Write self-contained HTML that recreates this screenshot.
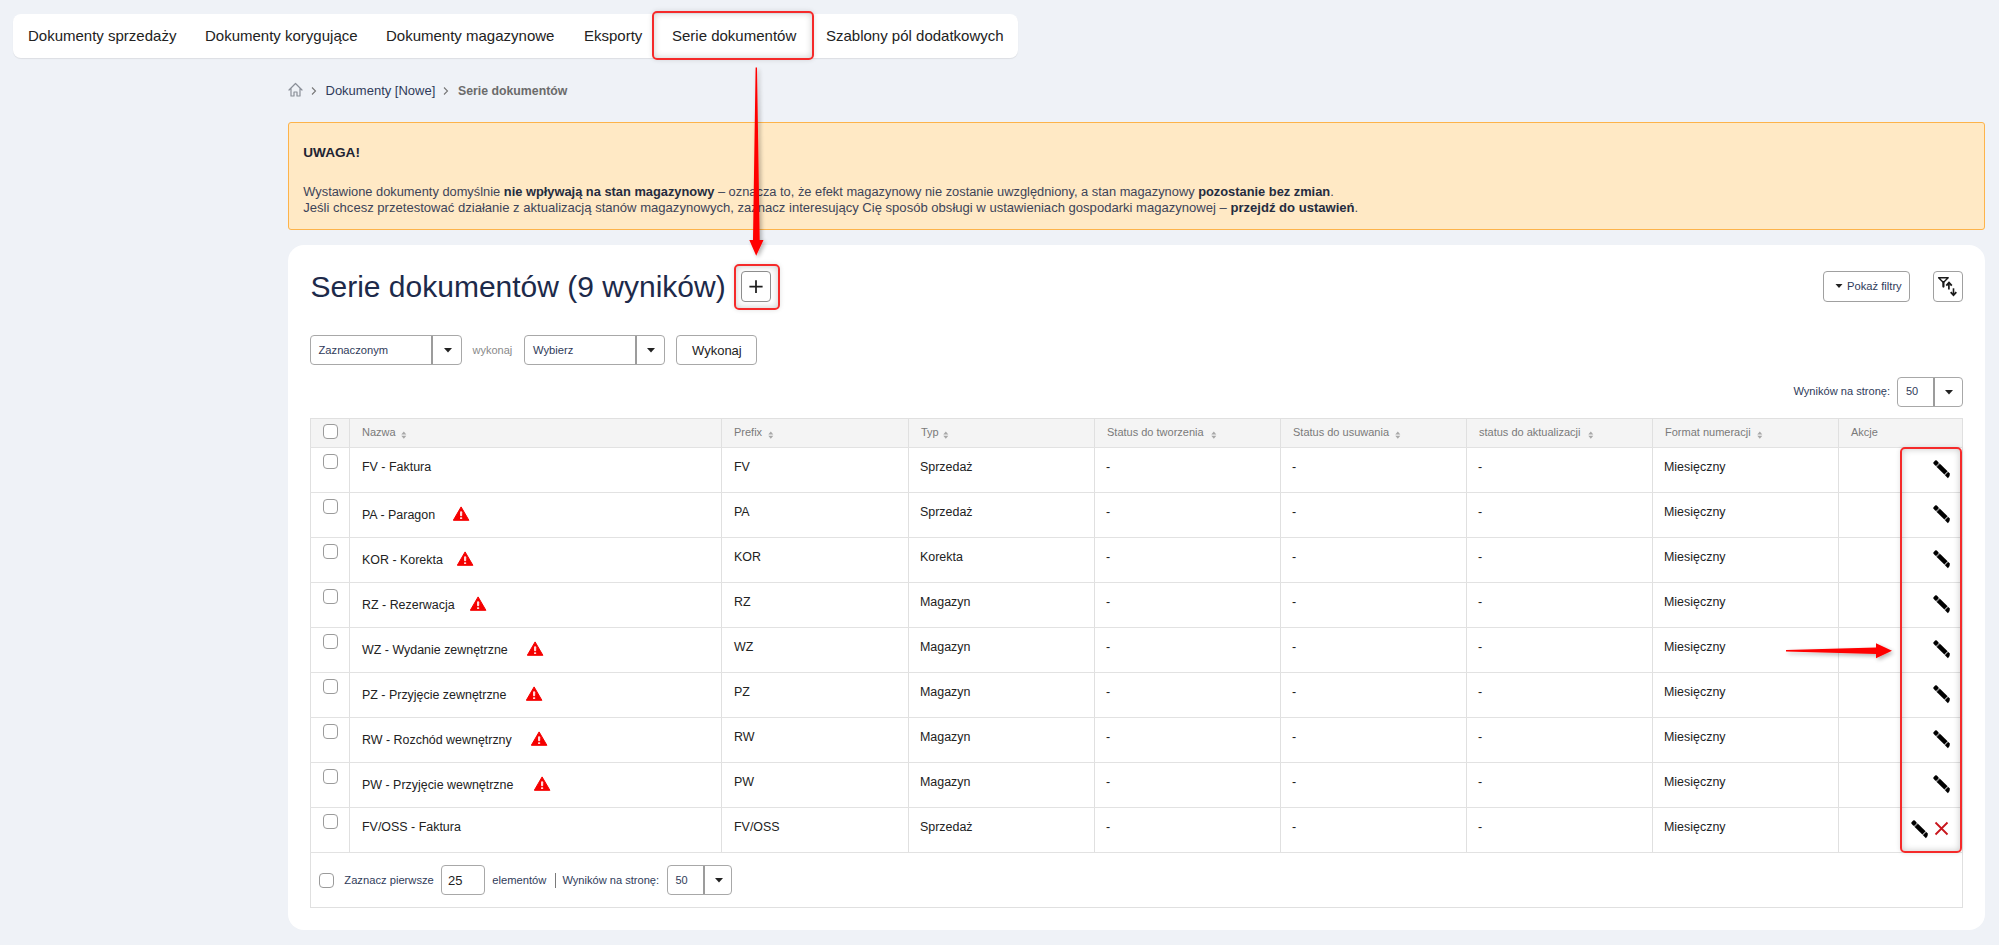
<!DOCTYPE html><html><head><meta charset="utf-8"><style>
html,body{margin:0;padding:0;width:1999px;height:945px;overflow:hidden;background:#eff2f7;font-family:"Liberation Sans",sans-serif;}
.t{position:absolute;white-space:nowrap;}
</style></head><body>
<div style="position:absolute;left:13px;top:14px;width:1005px;height:44px;box-sizing:border-box;background:#fff;border-radius:8px;box-shadow:0 1px 1px rgba(0,0,0,0.08);"></div>
<div class="t" style="left:28px;top:28.30px;font-size:15px;line-height:15px;color:#222;font-weight:400;">Dokumenty sprzedaży</div>
<div class="t" style="left:205px;top:28.30px;font-size:15px;line-height:15px;color:#222;font-weight:400;">Dokumenty korygujące</div>
<div class="t" style="left:386px;top:28.30px;font-size:15px;line-height:15px;color:#222;font-weight:400;">Dokumenty magazynowe</div>
<div class="t" style="left:584px;top:28.30px;font-size:15px;line-height:15px;color:#222;font-weight:400;">Eksporty</div>
<div class="t" style="left:672px;top:28.30px;font-size:15px;line-height:15px;color:#222;font-weight:400;">Serie dokumentów</div>
<div class="t" style="left:826px;top:28.30px;font-size:15px;line-height:15px;color:#222;font-weight:400;">Szablony pól dodatkowych</div>
<div style="position:absolute;left:652px;top:11px;width:162px;height:49px;box-sizing:border-box;border:2px solid #f52a2a;border-radius:5px;box-shadow:inset 0 0 7px rgba(0,0,0,0.2), 0 0 5px rgba(0,0,0,0.12);"></div>
<svg style="position:absolute;left:287px;top:81px" width="17" height="17" viewBox="0 0 17 17"><path d="M2 9 L8.5 2.5 L15 9 M4 7.5 V15 H7 V11 H10 V15 H13 V7.5" fill="none" stroke="#8a8f98" stroke-width="1.2" stroke-linejoin="round" stroke-linecap="round"/></svg>
<svg style="position:absolute;left:310px;top:86px" width="8" height="10" viewBox="0 0 8 10"><path d="M2 1.5 L5.5 5 L2 8.5" fill="none" stroke="#777" stroke-width="1.1"/></svg>
<div class="t" style="left:325.5px;top:84.40px;font-size:13px;line-height:13px;color:#2f3b5a;font-weight:400;">Dokumenty [Nowe]</div>
<svg style="position:absolute;left:442px;top:86px" width="8" height="10" viewBox="0 0 8 10"><path d="M2 1.5 L5.5 5 L2 8.5" fill="none" stroke="#777" stroke-width="1.1"/></svg>
<div class="t" style="left:458px;top:84.99px;font-size:12.3px;line-height:12.3px;color:#6b6b6b;font-weight:700;">Serie dokumentów</div>
<div style="position:absolute;left:288px;top:122px;width:1697px;height:108px;box-sizing:border-box;background:#ffe9c5;border:1px solid #fdb34a;border-radius:3px;"></div>
<div class="t" style="left:303.3px;top:146.49px;font-size:13.6px;line-height:13.6px;color:#1e2433;font-weight:700;">UWAGA!</div>
<div class="t" style="left:303.3px;top:186.12px;font-size:12.85px;line-height:12.85px;color:#3d4458;font-weight:400;">Wystawione dokumenty domyślnie <b style="color:#252c40">nie wpływają na stan magazynowy</b> – oznacza to, że efekt magazynowy nie zostanie uwzględniony, a stan magazynowy <b style="color:#252c40">pozostanie bez zmian</b>.</div>
<div class="t" style="left:303.3px;top:201.44px;font-size:13.07px;line-height:13.07px;color:#3d4458;font-weight:400;">Jeśli chcesz przetestować działanie z aktualizacją stanów magazynowych, zaznacz interesujący Cię sposób obsługi w ustawieniach gospodarki magazynowej – <b style="color:#252c40">przejdź do ustawień</b>.</div>
<div style="position:absolute;left:288px;top:245px;width:1697px;height:685px;box-sizing:border-box;background:#fff;border-radius:16px;"></div>
<div class="t" style="left:310.5px;top:271.91px;font-size:30px;line-height:30px;color:#1d2a4a;font-weight:400;">Serie dokumentów (9 wyników)</div>
<div style="position:absolute;left:741px;top:271px;width:30px;height:31px;box-sizing:border-box;border:1px solid #8f8f8f;border-radius:4px;background:#fff;"></div>
<svg style="position:absolute;left:749px;top:279px" width="15" height="15" viewBox="0 0 15 15"><path d="M7 1.2 V14 M0.4 7.6 H13.6" stroke="#1e1e1e" stroke-width="1.75"/></svg>
<div style="position:absolute;left:734px;top:264px;width:46px;height:46px;box-sizing:border-box;border:2px solid #f52a2a;border-radius:5px;box-shadow:inset 0 0 7px rgba(0,0,0,0.22), 0 0 5px rgba(0,0,0,0.12);"></div>
<div style="position:absolute;left:1823px;top:271px;width:87px;height:31px;box-sizing:border-box;border:1px solid #a0a0a0;border-radius:4px;background:#fff;"></div>
<svg style="position:absolute;left:1835px;top:283px" width="8" height="6" viewBox="0 0 8 6"><path d="M0.5 1 H7.5 L4 5 Z" fill="#222"/></svg>
<div class="t" style="left:1847px;top:281.02px;font-size:11.2px;line-height:11.2px;color:#2f3b5a;font-weight:400;">Pokaż filtry</div>
<div style="position:absolute;left:1933px;top:271px;width:30px;height:31px;box-sizing:border-box;border:1px solid #a0a0a0;border-radius:4px;background:#fff;"></div>
<svg style="position:absolute;left:1930px;top:268px" width="36" height="36" viewBox="0 0 36 36"><path d="M8.6 9.8 H18.2 L13.4 14.6 Z" fill="none" stroke="#1a1a1a" stroke-width="1.4" stroke-linejoin="round"/><path d="M13.4 14 V18.6" stroke="#1a1a1a" stroke-width="2.2" stroke-linecap="round"/><path d="M18.9 15.2 V21.6" stroke="#1a1a1a" stroke-width="1.7"/><path d="M16.3 17.6 L19 14.6 L21.8 17.6" fill="none" stroke="#1a1a1a" stroke-width="1.8"/><path d="M23.5 20.3 V26.6" stroke="#1a1a1a" stroke-width="1.6"/><path d="M20.7 24.2 L23.5 27.2 L26.3 24.2" fill="none" stroke="#1a1a1a" stroke-width="1.8"/></svg>
<div style="position:absolute;left:310px;top:335px;width:152px;height:30px;box-sizing:border-box;border:1px solid #a8a8a8;border-radius:4px;background:#fff;"></div>
<div style="position:absolute;left:431px;top:336px;width:2px;height:28px;box-sizing:border-box;background:#9c9c9c;"></div>
<div class="t" style="left:318.5px;top:344.52px;font-size:11.2px;line-height:11.2px;color:#2f3b5a;font-weight:400;">Zaznaczonym</div>
<svg style="position:absolute;left:443.5px;top:348.0px" width="8" height="5" viewBox="0 0 8 5"><path d="M0 0 H8 L4 4.5 Z" fill="#222"/></svg>
<div class="t" style="left:472.5px;top:344.69px;font-size:11px;line-height:11px;color:#8a8a8a;font-weight:400;">wykonaj</div>
<div style="position:absolute;left:524px;top:335px;width:141px;height:30px;box-sizing:border-box;border:1px solid #a8a8a8;border-radius:4px;background:#fff;"></div>
<div style="position:absolute;left:635px;top:336px;width:2px;height:28px;box-sizing:border-box;background:#9c9c9c;"></div>
<div class="t" style="left:533px;top:344.52px;font-size:11.2px;line-height:11.2px;color:#2f3b5a;font-weight:400;">Wybierz</div>
<svg style="position:absolute;left:647.0px;top:348.0px" width="8" height="5" viewBox="0 0 8 5"><path d="M0 0 H8 L4 4.5 Z" fill="#222"/></svg>
<div style="position:absolute;left:676px;top:335px;width:81px;height:30px;box-sizing:border-box;border:1px solid #a8a8a8;border-radius:4px;background:#fff;"></div>
<div class="t" style="left:692px;top:344.00px;font-size:13px;line-height:13px;color:#222;font-weight:400;">Wykonaj</div>
<div class="t" style="left:1793.4px;top:385.80px;font-size:11.1px;line-height:11.1px;color:#2f3b5a;font-weight:400;">Wyników na stronę:</div>
<div style="position:absolute;left:1897px;top:377px;width:66px;height:30px;box-sizing:border-box;border:1px solid #a8a8a8;border-radius:4px;background:#fff;"></div>
<div style="position:absolute;left:1933px;top:378px;width:2px;height:28px;box-sizing:border-box;background:#9c9c9c;"></div>
<div class="t" style="left:1906px;top:385.89px;font-size:11px;line-height:11px;color:#2f3b5a;font-weight:400;">50</div>
<svg style="position:absolute;left:1945.0px;top:390.0px" width="8" height="5" viewBox="0 0 8 5"><path d="M0 0 H8 L4 4.5 Z" fill="#222"/></svg>
<div style="position:absolute;left:310px;top:418px;width:1653px;height:490px;box-sizing:border-box;border:1px solid #e0e0e0;background:#fff;"></div>
<div style="position:absolute;left:310px;top:418px;width:1653px;height:30px;box-sizing:border-box;border:1px solid #e0e0e0;background:#f4f4f4;"></div>
<div style="position:absolute;left:349px;top:418px;width:1px;height:434px;box-sizing:border-box;background:#e0e0e0;"></div>
<div style="position:absolute;left:721px;top:418px;width:1px;height:434px;box-sizing:border-box;background:#e0e0e0;"></div>
<div style="position:absolute;left:908px;top:418px;width:1px;height:434px;box-sizing:border-box;background:#e0e0e0;"></div>
<div style="position:absolute;left:1094px;top:418px;width:1px;height:434px;box-sizing:border-box;background:#e0e0e0;"></div>
<div style="position:absolute;left:1280px;top:418px;width:1px;height:434px;box-sizing:border-box;background:#e0e0e0;"></div>
<div style="position:absolute;left:1466px;top:418px;width:1px;height:434px;box-sizing:border-box;background:#e0e0e0;"></div>
<div style="position:absolute;left:1652px;top:418px;width:1px;height:434px;box-sizing:border-box;background:#e0e0e0;"></div>
<div style="position:absolute;left:1838px;top:418px;width:1px;height:434px;box-sizing:border-box;background:#e0e0e0;"></div>
<div style="position:absolute;left:310px;top:447px;width:1653px;height:1px;box-sizing:border-box;background:#e2e2e2;"></div>
<div style="position:absolute;left:310px;top:492px;width:1653px;height:1px;box-sizing:border-box;background:#e2e2e2;"></div>
<div style="position:absolute;left:310px;top:537px;width:1653px;height:1px;box-sizing:border-box;background:#e2e2e2;"></div>
<div style="position:absolute;left:310px;top:582px;width:1653px;height:1px;box-sizing:border-box;background:#e2e2e2;"></div>
<div style="position:absolute;left:310px;top:627px;width:1653px;height:1px;box-sizing:border-box;background:#e2e2e2;"></div>
<div style="position:absolute;left:310px;top:672px;width:1653px;height:1px;box-sizing:border-box;background:#e2e2e2;"></div>
<div style="position:absolute;left:310px;top:717px;width:1653px;height:1px;box-sizing:border-box;background:#e2e2e2;"></div>
<div style="position:absolute;left:310px;top:762px;width:1653px;height:1px;box-sizing:border-box;background:#e2e2e2;"></div>
<div style="position:absolute;left:310px;top:807px;width:1653px;height:1px;box-sizing:border-box;background:#e2e2e2;"></div>
<div style="position:absolute;left:310px;top:852px;width:1653px;height:1px;box-sizing:border-box;background:#e2e2e2;"></div>
<div class="t" style="left:362px;top:426.89px;font-size:11px;line-height:11px;color:#7a7a7a;font-weight:400;">Nazwa</div>
<svg style="position:absolute;left:400.8px;top:431px" width="6" height="9" viewBox="0 0 6 9"><path d="M0.3 3.4 L2.8 0.6 L5.3 3.4 Z M0.3 4.8 L2.8 7.8 L5.3 4.8 Z" fill="#a8a8a8"/></svg>
<div class="t" style="left:734px;top:426.89px;font-size:11px;line-height:11px;color:#7a7a7a;font-weight:400;">Prefix</div>
<svg style="position:absolute;left:767.6px;top:431px" width="6" height="9" viewBox="0 0 6 9"><path d="M0.3 3.4 L2.8 0.6 L5.3 3.4 Z M0.3 4.8 L2.8 7.8 L5.3 4.8 Z" fill="#a8a8a8"/></svg>
<div class="t" style="left:921px;top:426.89px;font-size:11px;line-height:11px;color:#7a7a7a;font-weight:400;">Typ</div>
<svg style="position:absolute;left:943.2px;top:431px" width="6" height="9" viewBox="0 0 6 9"><path d="M0.3 3.4 L2.8 0.6 L5.3 3.4 Z M0.3 4.8 L2.8 7.8 L5.3 4.8 Z" fill="#a8a8a8"/></svg>
<div class="t" style="left:1107px;top:426.89px;font-size:11px;line-height:11px;color:#7a7a7a;font-weight:400;">Status do tworzenia</div>
<svg style="position:absolute;left:1210.5px;top:431px" width="6" height="9" viewBox="0 0 6 9"><path d="M0.3 3.4 L2.8 0.6 L5.3 3.4 Z M0.3 4.8 L2.8 7.8 L5.3 4.8 Z" fill="#a8a8a8"/></svg>
<div class="t" style="left:1293px;top:426.89px;font-size:11px;line-height:11px;color:#7a7a7a;font-weight:400;">Status do usuwania</div>
<svg style="position:absolute;left:1395.0px;top:431px" width="6" height="9" viewBox="0 0 6 9"><path d="M0.3 3.4 L2.8 0.6 L5.3 3.4 Z M0.3 4.8 L2.8 7.8 L5.3 4.8 Z" fill="#a8a8a8"/></svg>
<div class="t" style="left:1479px;top:426.89px;font-size:11px;line-height:11px;color:#7a7a7a;font-weight:400;">status do aktualizacji</div>
<svg style="position:absolute;left:1588.4px;top:431px" width="6" height="9" viewBox="0 0 6 9"><path d="M0.3 3.4 L2.8 0.6 L5.3 3.4 Z M0.3 4.8 L2.8 7.8 L5.3 4.8 Z" fill="#a8a8a8"/></svg>
<div class="t" style="left:1665px;top:426.89px;font-size:11px;line-height:11px;color:#7a7a7a;font-weight:400;">Format numeracji</div>
<svg style="position:absolute;left:1756.9px;top:431px" width="6" height="9" viewBox="0 0 6 9"><path d="M0.3 3.4 L2.8 0.6 L5.3 3.4 Z M0.3 4.8 L2.8 7.8 L5.3 4.8 Z" fill="#a8a8a8"/></svg>
<div class="t" style="left:1851px;top:426.89px;font-size:11px;line-height:11px;color:#7a7a7a;font-weight:400;">Akcje</div>
<div style="position:absolute;left:323px;top:424px;width:15px;height:15px;box-sizing:border-box;border:1px solid #9b9b9b;border-radius:4px;background:#fff;"></div>
<div style="position:absolute;left:323px;top:454px;width:15px;height:15px;box-sizing:border-box;border:1px solid #9b9b9b;border-radius:4px;background:#fff;"></div>
<div class="t" style="left:362px;top:460.96px;font-size:12.45px;line-height:12.45px;color:#222;font-weight:400;">FV - Faktura</div>
<div class="t" style="left:734px;top:460.96px;font-size:12.45px;line-height:12.45px;color:#222;font-weight:400;">FV</div>
<div class="t" style="left:920px;top:460.96px;font-size:12.45px;line-height:12.45px;color:#222;font-weight:400;">Sprzedaż</div>
<div class="t" style="left:1106px;top:460.96px;font-size:12.45px;line-height:12.45px;color:#222;font-weight:400;">-</div>
<div class="t" style="left:1292px;top:460.96px;font-size:12.45px;line-height:12.45px;color:#222;font-weight:400;">-</div>
<div class="t" style="left:1478px;top:460.96px;font-size:12.45px;line-height:12.45px;color:#222;font-weight:400;">-</div>
<div class="t" style="left:1664px;top:460.96px;font-size:12.45px;line-height:12.45px;color:#222;font-weight:400;">Miesięczny</div>
<svg style="position:absolute;left:1930.7px;top:457.9px" width="22" height="22" viewBox="0 0 22 22"><g transform="translate(11 11) rotate(45)"><rect x="-10.8" y="-2.3" width="4.6" height="4.6" rx="1.2" fill="#000"/><rect x="-6.2" y="-2.3" width="1.0" height="4.6" fill="#858585"/><rect x="-5.2" y="-2.3" width="10.8" height="4.6" fill="#000"/><rect x="5.6" y="-2.3" width="0.9" height="4.6" fill="#858585"/><path d="M6.5 -2.3 L8.8 -2.3 Q11 -0.6 10.7 2.3 L6.5 2.3 Z" fill="#000"/></g></svg>
<div style="position:absolute;left:323px;top:499px;width:15px;height:15px;box-sizing:border-box;border:1px solid #9b9b9b;border-radius:4px;background:#fff;"></div>
<div class="t" style="left:362px;top:509.46px;font-size:12.45px;line-height:12.45px;color:#222;font-weight:400;">PA - Paragon</div>
<svg style="position:absolute;left:452.7px;top:506px" width="17" height="16" viewBox="0 0 17 16"><path d="M8.1 0.9 L15.9 14.3 H0.3 Z" fill="#f50000" stroke="#f50000" stroke-width="1" stroke-linejoin="round"/><rect x="7" y="5.2" width="2.2" height="5" rx="1" fill="#ffd8d8"/><rect x="7" y="11.2" width="2.2" height="1.9" rx="0.6" fill="#ffd8d8"/></svg>
<div class="t" style="left:734px;top:505.96px;font-size:12.45px;line-height:12.45px;color:#222;font-weight:400;">PA</div>
<div class="t" style="left:920px;top:505.96px;font-size:12.45px;line-height:12.45px;color:#222;font-weight:400;">Sprzedaż</div>
<div class="t" style="left:1106px;top:505.96px;font-size:12.45px;line-height:12.45px;color:#222;font-weight:400;">-</div>
<div class="t" style="left:1292px;top:505.96px;font-size:12.45px;line-height:12.45px;color:#222;font-weight:400;">-</div>
<div class="t" style="left:1478px;top:505.96px;font-size:12.45px;line-height:12.45px;color:#222;font-weight:400;">-</div>
<div class="t" style="left:1664px;top:505.96px;font-size:12.45px;line-height:12.45px;color:#222;font-weight:400;">Miesięczny</div>
<svg style="position:absolute;left:1930.7px;top:502.9px" width="22" height="22" viewBox="0 0 22 22"><g transform="translate(11 11) rotate(45)"><rect x="-10.8" y="-2.3" width="4.6" height="4.6" rx="1.2" fill="#000"/><rect x="-6.2" y="-2.3" width="1.0" height="4.6" fill="#858585"/><rect x="-5.2" y="-2.3" width="10.8" height="4.6" fill="#000"/><rect x="5.6" y="-2.3" width="0.9" height="4.6" fill="#858585"/><path d="M6.5 -2.3 L8.8 -2.3 Q11 -0.6 10.7 2.3 L6.5 2.3 Z" fill="#000"/></g></svg>
<div style="position:absolute;left:323px;top:544px;width:15px;height:15px;box-sizing:border-box;border:1px solid #9b9b9b;border-radius:4px;background:#fff;"></div>
<div class="t" style="left:362px;top:554.46px;font-size:12.45px;line-height:12.45px;color:#222;font-weight:400;">KOR - Korekta</div>
<svg style="position:absolute;left:457.2px;top:551px" width="17" height="16" viewBox="0 0 17 16"><path d="M8.1 0.9 L15.9 14.3 H0.3 Z" fill="#f50000" stroke="#f50000" stroke-width="1" stroke-linejoin="round"/><rect x="7" y="5.2" width="2.2" height="5" rx="1" fill="#ffd8d8"/><rect x="7" y="11.2" width="2.2" height="1.9" rx="0.6" fill="#ffd8d8"/></svg>
<div class="t" style="left:734px;top:550.96px;font-size:12.45px;line-height:12.45px;color:#222;font-weight:400;">KOR</div>
<div class="t" style="left:920px;top:550.96px;font-size:12.45px;line-height:12.45px;color:#222;font-weight:400;">Korekta</div>
<div class="t" style="left:1106px;top:550.96px;font-size:12.45px;line-height:12.45px;color:#222;font-weight:400;">-</div>
<div class="t" style="left:1292px;top:550.96px;font-size:12.45px;line-height:12.45px;color:#222;font-weight:400;">-</div>
<div class="t" style="left:1478px;top:550.96px;font-size:12.45px;line-height:12.45px;color:#222;font-weight:400;">-</div>
<div class="t" style="left:1664px;top:550.96px;font-size:12.45px;line-height:12.45px;color:#222;font-weight:400;">Miesięczny</div>
<svg style="position:absolute;left:1930.7px;top:547.9px" width="22" height="22" viewBox="0 0 22 22"><g transform="translate(11 11) rotate(45)"><rect x="-10.8" y="-2.3" width="4.6" height="4.6" rx="1.2" fill="#000"/><rect x="-6.2" y="-2.3" width="1.0" height="4.6" fill="#858585"/><rect x="-5.2" y="-2.3" width="10.8" height="4.6" fill="#000"/><rect x="5.6" y="-2.3" width="0.9" height="4.6" fill="#858585"/><path d="M6.5 -2.3 L8.8 -2.3 Q11 -0.6 10.7 2.3 L6.5 2.3 Z" fill="#000"/></g></svg>
<div style="position:absolute;left:323px;top:589px;width:15px;height:15px;box-sizing:border-box;border:1px solid #9b9b9b;border-radius:4px;background:#fff;"></div>
<div class="t" style="left:362px;top:599.46px;font-size:12.45px;line-height:12.45px;color:#222;font-weight:400;">RZ - Rezerwacja</div>
<svg style="position:absolute;left:470.2px;top:596px" width="17" height="16" viewBox="0 0 17 16"><path d="M8.1 0.9 L15.9 14.3 H0.3 Z" fill="#f50000" stroke="#f50000" stroke-width="1" stroke-linejoin="round"/><rect x="7" y="5.2" width="2.2" height="5" rx="1" fill="#ffd8d8"/><rect x="7" y="11.2" width="2.2" height="1.9" rx="0.6" fill="#ffd8d8"/></svg>
<div class="t" style="left:734px;top:595.96px;font-size:12.45px;line-height:12.45px;color:#222;font-weight:400;">RZ</div>
<div class="t" style="left:920px;top:595.96px;font-size:12.45px;line-height:12.45px;color:#222;font-weight:400;">Magazyn</div>
<div class="t" style="left:1106px;top:595.96px;font-size:12.45px;line-height:12.45px;color:#222;font-weight:400;">-</div>
<div class="t" style="left:1292px;top:595.96px;font-size:12.45px;line-height:12.45px;color:#222;font-weight:400;">-</div>
<div class="t" style="left:1478px;top:595.96px;font-size:12.45px;line-height:12.45px;color:#222;font-weight:400;">-</div>
<div class="t" style="left:1664px;top:595.96px;font-size:12.45px;line-height:12.45px;color:#222;font-weight:400;">Miesięczny</div>
<svg style="position:absolute;left:1930.7px;top:592.9px" width="22" height="22" viewBox="0 0 22 22"><g transform="translate(11 11) rotate(45)"><rect x="-10.8" y="-2.3" width="4.6" height="4.6" rx="1.2" fill="#000"/><rect x="-6.2" y="-2.3" width="1.0" height="4.6" fill="#858585"/><rect x="-5.2" y="-2.3" width="10.8" height="4.6" fill="#000"/><rect x="5.6" y="-2.3" width="0.9" height="4.6" fill="#858585"/><path d="M6.5 -2.3 L8.8 -2.3 Q11 -0.6 10.7 2.3 L6.5 2.3 Z" fill="#000"/></g></svg>
<div style="position:absolute;left:323px;top:634px;width:15px;height:15px;box-sizing:border-box;border:1px solid #9b9b9b;border-radius:4px;background:#fff;"></div>
<div class="t" style="left:362px;top:644.46px;font-size:12.45px;line-height:12.45px;color:#222;font-weight:400;">WZ - Wydanie zewnętrzne</div>
<svg style="position:absolute;left:527.2px;top:641px" width="17" height="16" viewBox="0 0 17 16"><path d="M8.1 0.9 L15.9 14.3 H0.3 Z" fill="#f50000" stroke="#f50000" stroke-width="1" stroke-linejoin="round"/><rect x="7" y="5.2" width="2.2" height="5" rx="1" fill="#ffd8d8"/><rect x="7" y="11.2" width="2.2" height="1.9" rx="0.6" fill="#ffd8d8"/></svg>
<div class="t" style="left:734px;top:640.96px;font-size:12.45px;line-height:12.45px;color:#222;font-weight:400;">WZ</div>
<div class="t" style="left:920px;top:640.96px;font-size:12.45px;line-height:12.45px;color:#222;font-weight:400;">Magazyn</div>
<div class="t" style="left:1106px;top:640.96px;font-size:12.45px;line-height:12.45px;color:#222;font-weight:400;">-</div>
<div class="t" style="left:1292px;top:640.96px;font-size:12.45px;line-height:12.45px;color:#222;font-weight:400;">-</div>
<div class="t" style="left:1478px;top:640.96px;font-size:12.45px;line-height:12.45px;color:#222;font-weight:400;">-</div>
<div class="t" style="left:1664px;top:640.96px;font-size:12.45px;line-height:12.45px;color:#222;font-weight:400;">Miesięczny</div>
<svg style="position:absolute;left:1930.7px;top:637.9px" width="22" height="22" viewBox="0 0 22 22"><g transform="translate(11 11) rotate(45)"><rect x="-10.8" y="-2.3" width="4.6" height="4.6" rx="1.2" fill="#000"/><rect x="-6.2" y="-2.3" width="1.0" height="4.6" fill="#858585"/><rect x="-5.2" y="-2.3" width="10.8" height="4.6" fill="#000"/><rect x="5.6" y="-2.3" width="0.9" height="4.6" fill="#858585"/><path d="M6.5 -2.3 L8.8 -2.3 Q11 -0.6 10.7 2.3 L6.5 2.3 Z" fill="#000"/></g></svg>
<div style="position:absolute;left:323px;top:679px;width:15px;height:15px;box-sizing:border-box;border:1px solid #9b9b9b;border-radius:4px;background:#fff;"></div>
<div class="t" style="left:362px;top:689.46px;font-size:12.45px;line-height:12.45px;color:#222;font-weight:400;">PZ - Przyjęcie zewnętrzne</div>
<svg style="position:absolute;left:526.2px;top:686px" width="17" height="16" viewBox="0 0 17 16"><path d="M8.1 0.9 L15.9 14.3 H0.3 Z" fill="#f50000" stroke="#f50000" stroke-width="1" stroke-linejoin="round"/><rect x="7" y="5.2" width="2.2" height="5" rx="1" fill="#ffd8d8"/><rect x="7" y="11.2" width="2.2" height="1.9" rx="0.6" fill="#ffd8d8"/></svg>
<div class="t" style="left:734px;top:685.96px;font-size:12.45px;line-height:12.45px;color:#222;font-weight:400;">PZ</div>
<div class="t" style="left:920px;top:685.96px;font-size:12.45px;line-height:12.45px;color:#222;font-weight:400;">Magazyn</div>
<div class="t" style="left:1106px;top:685.96px;font-size:12.45px;line-height:12.45px;color:#222;font-weight:400;">-</div>
<div class="t" style="left:1292px;top:685.96px;font-size:12.45px;line-height:12.45px;color:#222;font-weight:400;">-</div>
<div class="t" style="left:1478px;top:685.96px;font-size:12.45px;line-height:12.45px;color:#222;font-weight:400;">-</div>
<div class="t" style="left:1664px;top:685.96px;font-size:12.45px;line-height:12.45px;color:#222;font-weight:400;">Miesięczny</div>
<svg style="position:absolute;left:1930.7px;top:682.9px" width="22" height="22" viewBox="0 0 22 22"><g transform="translate(11 11) rotate(45)"><rect x="-10.8" y="-2.3" width="4.6" height="4.6" rx="1.2" fill="#000"/><rect x="-6.2" y="-2.3" width="1.0" height="4.6" fill="#858585"/><rect x="-5.2" y="-2.3" width="10.8" height="4.6" fill="#000"/><rect x="5.6" y="-2.3" width="0.9" height="4.6" fill="#858585"/><path d="M6.5 -2.3 L8.8 -2.3 Q11 -0.6 10.7 2.3 L6.5 2.3 Z" fill="#000"/></g></svg>
<div style="position:absolute;left:323px;top:724px;width:15px;height:15px;box-sizing:border-box;border:1px solid #9b9b9b;border-radius:4px;background:#fff;"></div>
<div class="t" style="left:362px;top:734.46px;font-size:12.45px;line-height:12.45px;color:#222;font-weight:400;">RW - Rozchód wewnętrzny</div>
<svg style="position:absolute;left:531.2px;top:731px" width="17" height="16" viewBox="0 0 17 16"><path d="M8.1 0.9 L15.9 14.3 H0.3 Z" fill="#f50000" stroke="#f50000" stroke-width="1" stroke-linejoin="round"/><rect x="7" y="5.2" width="2.2" height="5" rx="1" fill="#ffd8d8"/><rect x="7" y="11.2" width="2.2" height="1.9" rx="0.6" fill="#ffd8d8"/></svg>
<div class="t" style="left:734px;top:730.96px;font-size:12.45px;line-height:12.45px;color:#222;font-weight:400;">RW</div>
<div class="t" style="left:920px;top:730.96px;font-size:12.45px;line-height:12.45px;color:#222;font-weight:400;">Magazyn</div>
<div class="t" style="left:1106px;top:730.96px;font-size:12.45px;line-height:12.45px;color:#222;font-weight:400;">-</div>
<div class="t" style="left:1292px;top:730.96px;font-size:12.45px;line-height:12.45px;color:#222;font-weight:400;">-</div>
<div class="t" style="left:1478px;top:730.96px;font-size:12.45px;line-height:12.45px;color:#222;font-weight:400;">-</div>
<div class="t" style="left:1664px;top:730.96px;font-size:12.45px;line-height:12.45px;color:#222;font-weight:400;">Miesięczny</div>
<svg style="position:absolute;left:1930.7px;top:727.9px" width="22" height="22" viewBox="0 0 22 22"><g transform="translate(11 11) rotate(45)"><rect x="-10.8" y="-2.3" width="4.6" height="4.6" rx="1.2" fill="#000"/><rect x="-6.2" y="-2.3" width="1.0" height="4.6" fill="#858585"/><rect x="-5.2" y="-2.3" width="10.8" height="4.6" fill="#000"/><rect x="5.6" y="-2.3" width="0.9" height="4.6" fill="#858585"/><path d="M6.5 -2.3 L8.8 -2.3 Q11 -0.6 10.7 2.3 L6.5 2.3 Z" fill="#000"/></g></svg>
<div style="position:absolute;left:323px;top:769px;width:15px;height:15px;box-sizing:border-box;border:1px solid #9b9b9b;border-radius:4px;background:#fff;"></div>
<div class="t" style="left:362px;top:779.46px;font-size:12.45px;line-height:12.45px;color:#222;font-weight:400;">PW - Przyjęcie wewnętrzne</div>
<svg style="position:absolute;left:533.9000000000001px;top:776px" width="17" height="16" viewBox="0 0 17 16"><path d="M8.1 0.9 L15.9 14.3 H0.3 Z" fill="#f50000" stroke="#f50000" stroke-width="1" stroke-linejoin="round"/><rect x="7" y="5.2" width="2.2" height="5" rx="1" fill="#ffd8d8"/><rect x="7" y="11.2" width="2.2" height="1.9" rx="0.6" fill="#ffd8d8"/></svg>
<div class="t" style="left:734px;top:775.96px;font-size:12.45px;line-height:12.45px;color:#222;font-weight:400;">PW</div>
<div class="t" style="left:920px;top:775.96px;font-size:12.45px;line-height:12.45px;color:#222;font-weight:400;">Magazyn</div>
<div class="t" style="left:1106px;top:775.96px;font-size:12.45px;line-height:12.45px;color:#222;font-weight:400;">-</div>
<div class="t" style="left:1292px;top:775.96px;font-size:12.45px;line-height:12.45px;color:#222;font-weight:400;">-</div>
<div class="t" style="left:1478px;top:775.96px;font-size:12.45px;line-height:12.45px;color:#222;font-weight:400;">-</div>
<div class="t" style="left:1664px;top:775.96px;font-size:12.45px;line-height:12.45px;color:#222;font-weight:400;">Miesięczny</div>
<svg style="position:absolute;left:1930.7px;top:772.9px" width="22" height="22" viewBox="0 0 22 22"><g transform="translate(11 11) rotate(45)"><rect x="-10.8" y="-2.3" width="4.6" height="4.6" rx="1.2" fill="#000"/><rect x="-6.2" y="-2.3" width="1.0" height="4.6" fill="#858585"/><rect x="-5.2" y="-2.3" width="10.8" height="4.6" fill="#000"/><rect x="5.6" y="-2.3" width="0.9" height="4.6" fill="#858585"/><path d="M6.5 -2.3 L8.8 -2.3 Q11 -0.6 10.7 2.3 L6.5 2.3 Z" fill="#000"/></g></svg>
<div style="position:absolute;left:323px;top:814px;width:15px;height:15px;box-sizing:border-box;border:1px solid #9b9b9b;border-radius:4px;background:#fff;"></div>
<div class="t" style="left:362px;top:820.96px;font-size:12.45px;line-height:12.45px;color:#222;font-weight:400;">FV/OSS - Faktura</div>
<div class="t" style="left:734px;top:820.96px;font-size:12.45px;line-height:12.45px;color:#222;font-weight:400;">FV/OSS</div>
<div class="t" style="left:920px;top:820.96px;font-size:12.45px;line-height:12.45px;color:#222;font-weight:400;">Sprzedaż</div>
<div class="t" style="left:1106px;top:820.96px;font-size:12.45px;line-height:12.45px;color:#222;font-weight:400;">-</div>
<div class="t" style="left:1292px;top:820.96px;font-size:12.45px;line-height:12.45px;color:#222;font-weight:400;">-</div>
<div class="t" style="left:1478px;top:820.96px;font-size:12.45px;line-height:12.45px;color:#222;font-weight:400;">-</div>
<div class="t" style="left:1664px;top:820.96px;font-size:12.45px;line-height:12.45px;color:#222;font-weight:400;">Miesięczny</div>
<svg style="position:absolute;left:1909px;top:818.2px" width="22" height="22" viewBox="0 0 22 22"><g transform="translate(11 11) rotate(45)"><rect x="-10.8" y="-2.3" width="4.6" height="4.6" rx="1.2" fill="#000"/><rect x="-6.2" y="-2.3" width="1.0" height="4.6" fill="#858585"/><rect x="-5.2" y="-2.3" width="10.8" height="4.6" fill="#000"/><rect x="5.6" y="-2.3" width="0.9" height="4.6" fill="#858585"/><path d="M6.5 -2.3 L8.8 -2.3 Q11 -0.6 10.7 2.3 L6.5 2.3 Z" fill="#000"/></g></svg>
<svg style="position:absolute;left:1934px;top:821px" width="15" height="15" viewBox="0 0 15 15"><path d="M1.5 1.5 L13.5 13.5 M13.5 1.5 L1.5 13.5" stroke="#c8161d" stroke-width="1.8"/></svg>
<div style="position:absolute;left:319px;top:872.5px;width:15px;height:15.0px;box-sizing:border-box;border:1px solid #9b9b9b;border-radius:4px;background:#fff;"></div>
<div class="t" style="left:344.3px;top:874.92px;font-size:11.2px;line-height:11.2px;color:#2f3b5a;font-weight:400;">Zaznacz pierwsze</div>
<div style="position:absolute;left:441px;top:865px;width:44px;height:30px;box-sizing:border-box;border:1px solid #a8a8a8;border-radius:4px;background:#fff;"></div>
<div class="t" style="left:448px;top:874.00px;font-size:13px;line-height:13px;color:#222;font-weight:400;">25</div>
<div class="t" style="left:492.3px;top:874.92px;font-size:11.2px;line-height:11.2px;color:#2f3b5a;font-weight:400;">elementów</div>
<div style="position:absolute;left:555px;top:873px;width:1px;height:15px;box-sizing:border-box;background:#7a7a7a;"></div>
<div class="t" style="left:562.4px;top:875.00px;font-size:11.1px;line-height:11.1px;color:#2f3b5a;font-weight:400;">Wyników na stronę:</div>
<div style="position:absolute;left:667px;top:865px;width:65px;height:30px;box-sizing:border-box;border:1px solid #a8a8a8;border-radius:4px;background:#fff;"></div>
<div style="position:absolute;left:703px;top:866px;width:2px;height:28px;box-sizing:border-box;background:#9c9c9c;"></div>
<div class="t" style="left:675.5px;top:875.09px;font-size:11px;line-height:11px;color:#2f3b5a;font-weight:400;">50</div>
<svg style="position:absolute;left:714.5px;top:878.0px" width="8" height="5" viewBox="0 0 8 5"><path d="M0 0 H8 L4 4.5 Z" fill="#222"/></svg>
<div style="position:absolute;left:1900px;top:447px;width:62px;height:406px;box-sizing:border-box;border:2px solid #f52a2a;border-radius:5px;box-shadow:inset 0 0 7px rgba(0,0,0,0.22), 0 0 5px rgba(0,0,0,0.12);"></div>
<svg style="position:absolute;left:0;top:0" width="1999" height="945" viewBox="0 0 1999 945"><defs><filter id="sh" x="-50%" y="-50%" width="200%" height="200%"><feGaussianBlur in="SourceAlpha" stdDeviation="2"/><feOffset dx="2" dy="2"/><feComponentTransfer><feFuncA type="linear" slope="0.3"/></feComponentTransfer><feMerge><feMergeNode/><feMergeNode in="SourceGraphic"/></feMerge></filter></defs><path filter="url(#sh)" d="M755.6 67.5 L757 67.5 L759.7 240 L763.5 240 L756.2 255.8 L749.3 240 L753 240 Z" fill="#ff0000"/><path filter="url(#sh)" d="M1786 650 L1876 647.5 L1876 643.2 L1892 650.8 L1876 658.2 L1876 654 L1786 651.5 Z" fill="#ff0000"/></svg>
</body></html>
